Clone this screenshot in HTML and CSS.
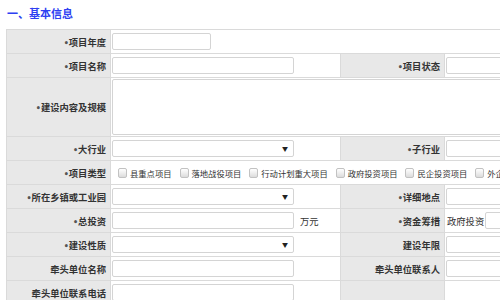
FILE: index.html
```html
<!DOCTYPE html>
<html lang="zh-CN">
<head>
	<meta charset="UTF-8">
	<title>基本信息</title>
	<link rel="stylesheet" href="styles.css">
</head>
<body>
	<div class="page">
		<h3 class="sec-title">一、基本信息</h3>
		<table class="form-tb">
			<colgroup>
				<col class="c-lab"><col class="c-val"><col class="c-lab"><col class="c-val">
			</colgroup>
			<tr>
				<td class="lab"><i>•</i>项目年度</td>
				<td class="val" colspan="3"><span class="ipt w-s"></span></td>
			</tr>
			<tr>
				<td class="lab"><i>•</i>项目名称</td>
				<td class="val"><span class="ipt w-m"></span></td>
				<td class="lab"><i>•</i>项目状态</td>
				<td class="val"><span class="ipt w-m"></span></td>
			</tr>
			<tr class="tall">
				<td class="lab"><i>•</i>建设内容及规模</td>
				<td class="val" colspan="3"><span class="ipt area"></span></td>
			</tr>
			<tr>
				<td class="lab"><i>•</i>大行业</td>
				<td class="val"><span class="ipt w-m sel"></span></td>
				<td class="lab"><i>•</i>子行业</td>
				<td class="val"><span class="ipt w-m"></span></td>
			</tr>
			<tr>
				<td class="lab"><i>•</i>项目类型</td>
				<td class="val" colspan="3">
					<div class="cb-list">
						<label><span class="cb"></span>县重点项目</label>
						<label><span class="cb"></span>落地战役项目</label>
						<label><span class="cb"></span>行动计划重大项目</label>
						<label><span class="cb"></span>政府投资项目</label>
						<label><span class="cb"></span>民企投资项目</label>
						<label><span class="cb"></span>外企投资项目</label>
					</div>
				</td>
			</tr>
			<tr>
				<td class="lab"><i>•</i>所在乡镇或工业园</td>
				<td class="val"><span class="ipt w-m sel"></span></td>
				<td class="lab"><i>•</i>详细地点</td>
				<td class="val"><span class="ipt w-m"></span></td>
			</tr>
			<tr>
				<td class="lab"><i>•</i>总投资</td>
				<td class="val"><div class="inl"><span class="ipt w-m"></span><span class="unit">万元</span></div></td>
				<td class="lab"><i>•</i>资金筹措</td>
				<td class="val"><div class="inl"><span class="txt">政府投资</span><span class="ipt w-m"></span></div></td>
			</tr>
			<tr>
				<td class="lab"><i>•</i>建设性质</td>
				<td class="val"><span class="ipt w-m sel"></span></td>
				<td class="lab">建设年限</td>
				<td class="val"><span class="ipt w-m"></span></td>
			</tr>
			<tr>
				<td class="lab">牵头单位名称</td>
				<td class="val"><span class="ipt w-m"></span></td>
				<td class="lab">牵头单位联系人</td>
				<td class="val"><span class="ipt w-m"></span></td>
			</tr>
			<tr>
				<td class="lab">牵头单位联系电话</td>
				<td class="val"><span class="ipt w-m"></span></td>
				<td class="lab"></td>
				<td class="val"></td>
			</tr>
		</table>
	</div>
</body>
</html>
```

FILE: styles.css
```css
html, body{
	margin: 0; padding: 0;
	background: #fff;
	overflow: hidden;
}
body{
	font-family: "Noto Sans CJK SC", "Noto Sans", sans-serif;
	font-size: 9.3px;
	color: #333;
}
.page{
	padding: 0 6px;
}
.sec-title{
	margin: 0;
	padding: 6px 0 0 1px;
	height: 29px;
	box-sizing: border-box;
	font-size: 11px;
	line-height: 14px;
	font-weight: bold;
	color: #2e3ff2;
}
.form-tb{
	border-collapse: collapse;
	table-layout: fixed;
	width: 668px;
}
.c-lab{ width: 104px; }
.c-val{ width: 230px; }
.form-tb td{
	border: 1px solid #dadada;
	height: 24px;
	padding: 0;
	box-sizing: border-box;
	white-space: nowrap;
	overflow: hidden;
}
.form-tb tr.tall td{
	height: 59px;
}
.lab{
	background: #e8e8e8;
	text-align: right;
	padding-right: 4px !important;
	font-weight: bold;
	color: #333;
}
.lab i{
	font-style: normal;
	font-family: "DejaVu Sans", sans-serif;
	font-size: 8px;
	color: #555;
}
.val{
	padding-left: 1px !important;
}
.ipt{
	display: block;
	height: 17px;
	box-sizing: border-box;
	border: 1px solid #d4d4d4;
	border-radius: 2px;
	background: #fff;
	position: relative;
}
.w-s{ width: 99px; }
.w-m{ width: 182px; }
.area{
	width: 420px;
	height: 56px;
}
.sel::after{
	content: "▼";
	position: absolute;
	right: 5px;
	top: 4px;
	font-size: 6px;
	line-height: 7px;
	color: #222;
}
.cb-list{
	display: flex;
	align-items: center;
	padding-left: 6px;
	gap: 8px;
	font-size: 8.3px;
	color: #333;
}
.cb-list label{
	display: flex;
	align-items: center;
	gap: 3px;
}
.cb{
	width: 7px;
	height: 8px;
	border: 1px solid #c2c2c2;
	border-radius: 2px;
	background: linear-gradient(#fff, #dcdcdc);
}
.inl{
	display: flex;
	align-items: center;
}
.unit{
	margin-left: 6px;
}
.txt{
	margin: 0 1px 0 1px;
}
```
